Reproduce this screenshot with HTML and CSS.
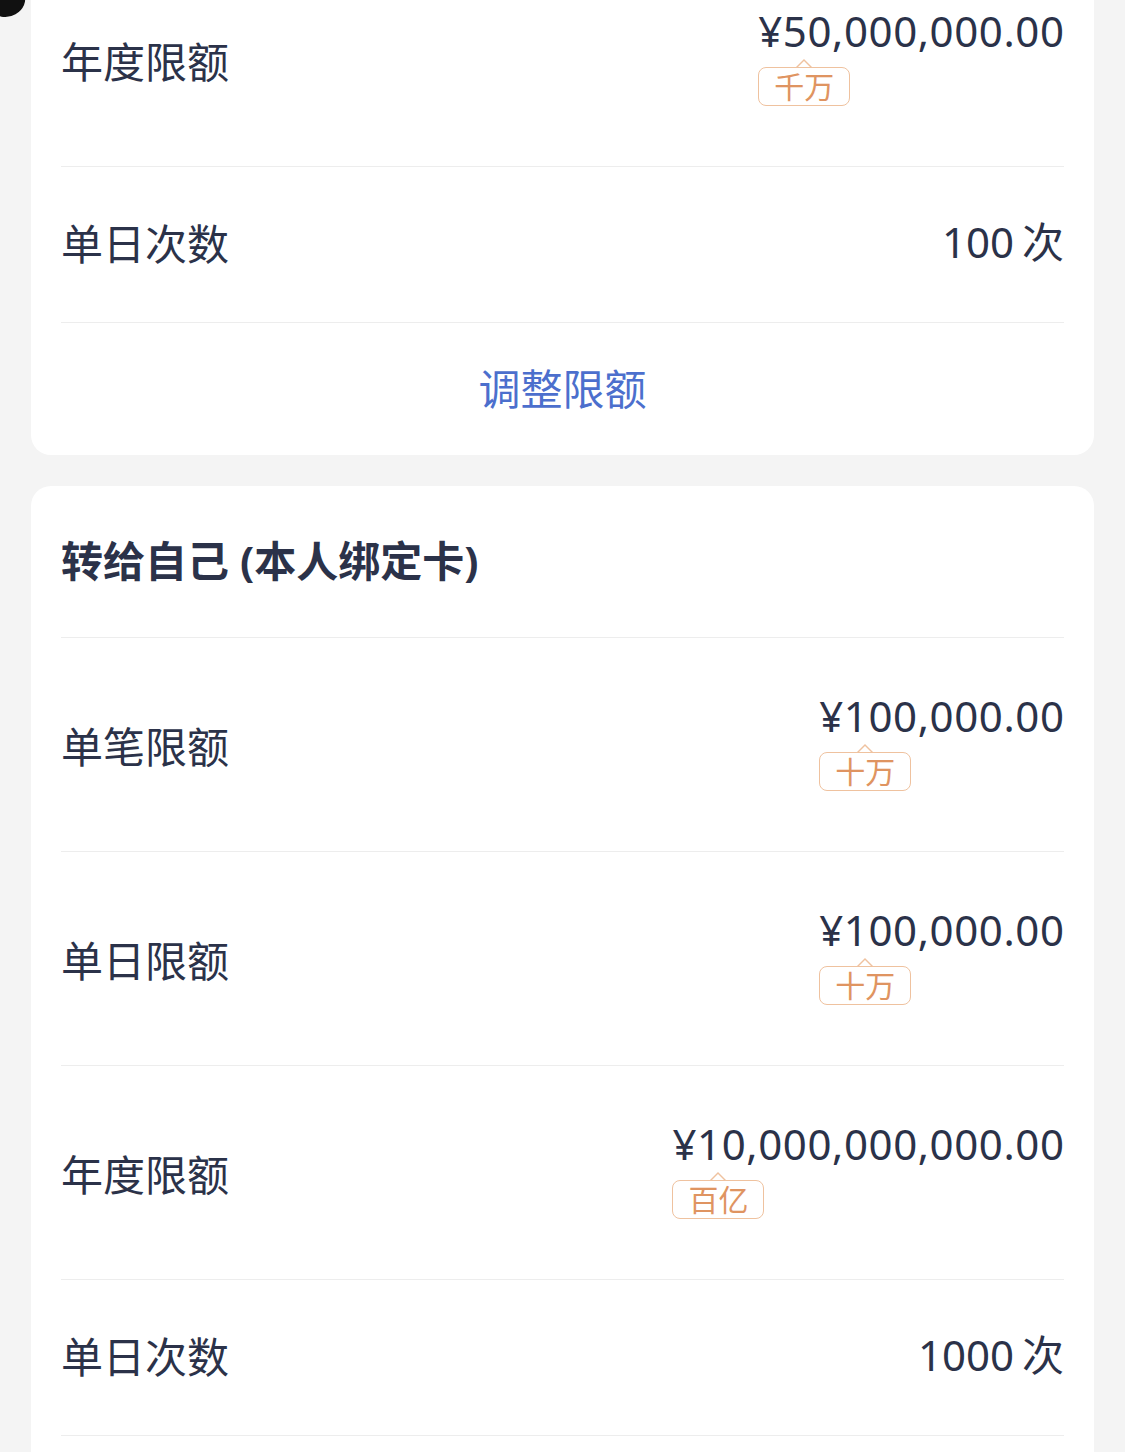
FILE: index.html
```html
<!DOCTYPE html>
<html lang="zh-CN">
<head>
<meta charset="utf-8">
<link rel="stylesheet" href="styles.css">
</head>
<body>
<div class="blob"></div>
<div class="page">
  <section class="card card-first">
    <div class="row row-amount">
      <div class="label">年度限额</div>
      <div class="value-block">
        <div class="amount">¥50,000,000.00</div>
        <span class="tag">千万</span>
      </div>
    </div>
    <div class="row row-simple">
      <div class="label">单日次数</div>
      <div class="count">100<span class="unit">次</span></div>
    </div>
    <div class="action">调整限额</div>
  </section>

  <section class="card">
    <div class="row row-title">
      <div class="title">转给自己 (本人绑定卡)</div>
    </div>
    <div class="row row-amount">
      <div class="label">单笔限额</div>
      <div class="value-block">
        <div class="amount">¥100,000.00</div>
        <span class="tag">十万</span>
      </div>
    </div>
    <div class="row row-amount">
      <div class="label">单日限额</div>
      <div class="value-block">
        <div class="amount">¥100,000.00</div>
        <span class="tag">十万</span>
      </div>
    </div>
    <div class="row row-amount">
      <div class="label">年度限额</div>
      <div class="value-block">
        <div class="amount">¥10,000,000,000.00</div>
        <span class="tag">百亿</span>
      </div>
    </div>
    <div class="row row-simple">
      <div class="label">单日次数</div>
      <div class="count">1000<span class="unit">次</span></div>
    </div>
    <div class="row row-simple"></div>
  </section>
</div>
</body>
</html>
```

FILE: styles.css
```css
* { box-sizing: border-box; }
html, body {
  margin: 0;
  padding: 0;
  background: #f4f4f4;
  height: 1452px;
  overflow: hidden;
}
body {
  font-family: "Noto Sans", "Noto Sans CJK SC", sans-serif;
  color: #2b3249;
  position: relative;
}
.blob {
  position: absolute;
  left: -8px;
  top: -10px;
  width: 34px;
  height: 26px;
  border-radius: 50%;
  background: #111;
  transform: rotate(-30deg);
  z-index: 2;
}
.page {
  padding: 0 31px;
  margin-top: -47px;
  display: flex;
  flex-direction: column;
  gap: 31px;
}
.card {
  background: #fff;
  border-radius: 20px;
  padding: 0 30px;
  display: flex;
  flex-direction: column;
}
.row {
  display: flex;
  align-items: center;
  justify-content: space-between;
  border-bottom: 1.5px solid #ededed;
}
.row-amount { height: 214px; }
.row-simple { height: 156px; padding-bottom: 6px; }
.row-title { height: 152px; padding-bottom: 2px; }
.label {
  font-family: "Noto Sans CJK SC", sans-serif;
  font-size: 42px;
  line-height: 50px;
  color: #2b3249;
}
.title {
  font-size: 42px;
  line-height: 50px;
  font-weight: 700;
  color: #2b3249;
}
.value-block {
  display: flex;
  flex-direction: column;
  align-items: flex-start;
  padding-bottom: 8px;
}
.amount {
  font-size: 42px;
  line-height: 50px;
  letter-spacing: 0.6px;
  margin-right: -0.6px;
  color: #2b3249;
}
.count {
  font-size: 42px;
  line-height: 50px;
  color: #2b3249;
}
.unit { margin-left: 8px; }
.tag {
  position: relative;
  margin-top: 11px;
  height: 39px;
  padding: 0 15px;
  border: 1.5px solid #efc29f;
  border-radius: 8px;
  font-family: "Noto Sans CJK SC", sans-serif;
  font-size: 30px;
  line-height: 35px;
  color: #df9461;
}
.tag::before,
.tag::after {
  content: "";
  position: absolute;
  left: 50%;
  width: 0;
  height: 0;
  border-style: solid;
  transform: translateX(-50%);
}
.tag::before {
  top: -9px;
  border-width: 0 8px 8px 8px;
  border-color: transparent transparent #efc29f transparent;
}
.tag::after {
  top: -6.5px;
  border-width: 0 6.5px 6.5px 6.5px;
  border-color: transparent transparent #fff transparent;
}
.action {
  height: 132px;
  display: flex;
  align-items: center;
  justify-content: center;
  padding-bottom: 6px;
  font-family: "Noto Sans CJK SC", sans-serif;
  font-size: 42px;
  color: #4c6fcd;
}
```
